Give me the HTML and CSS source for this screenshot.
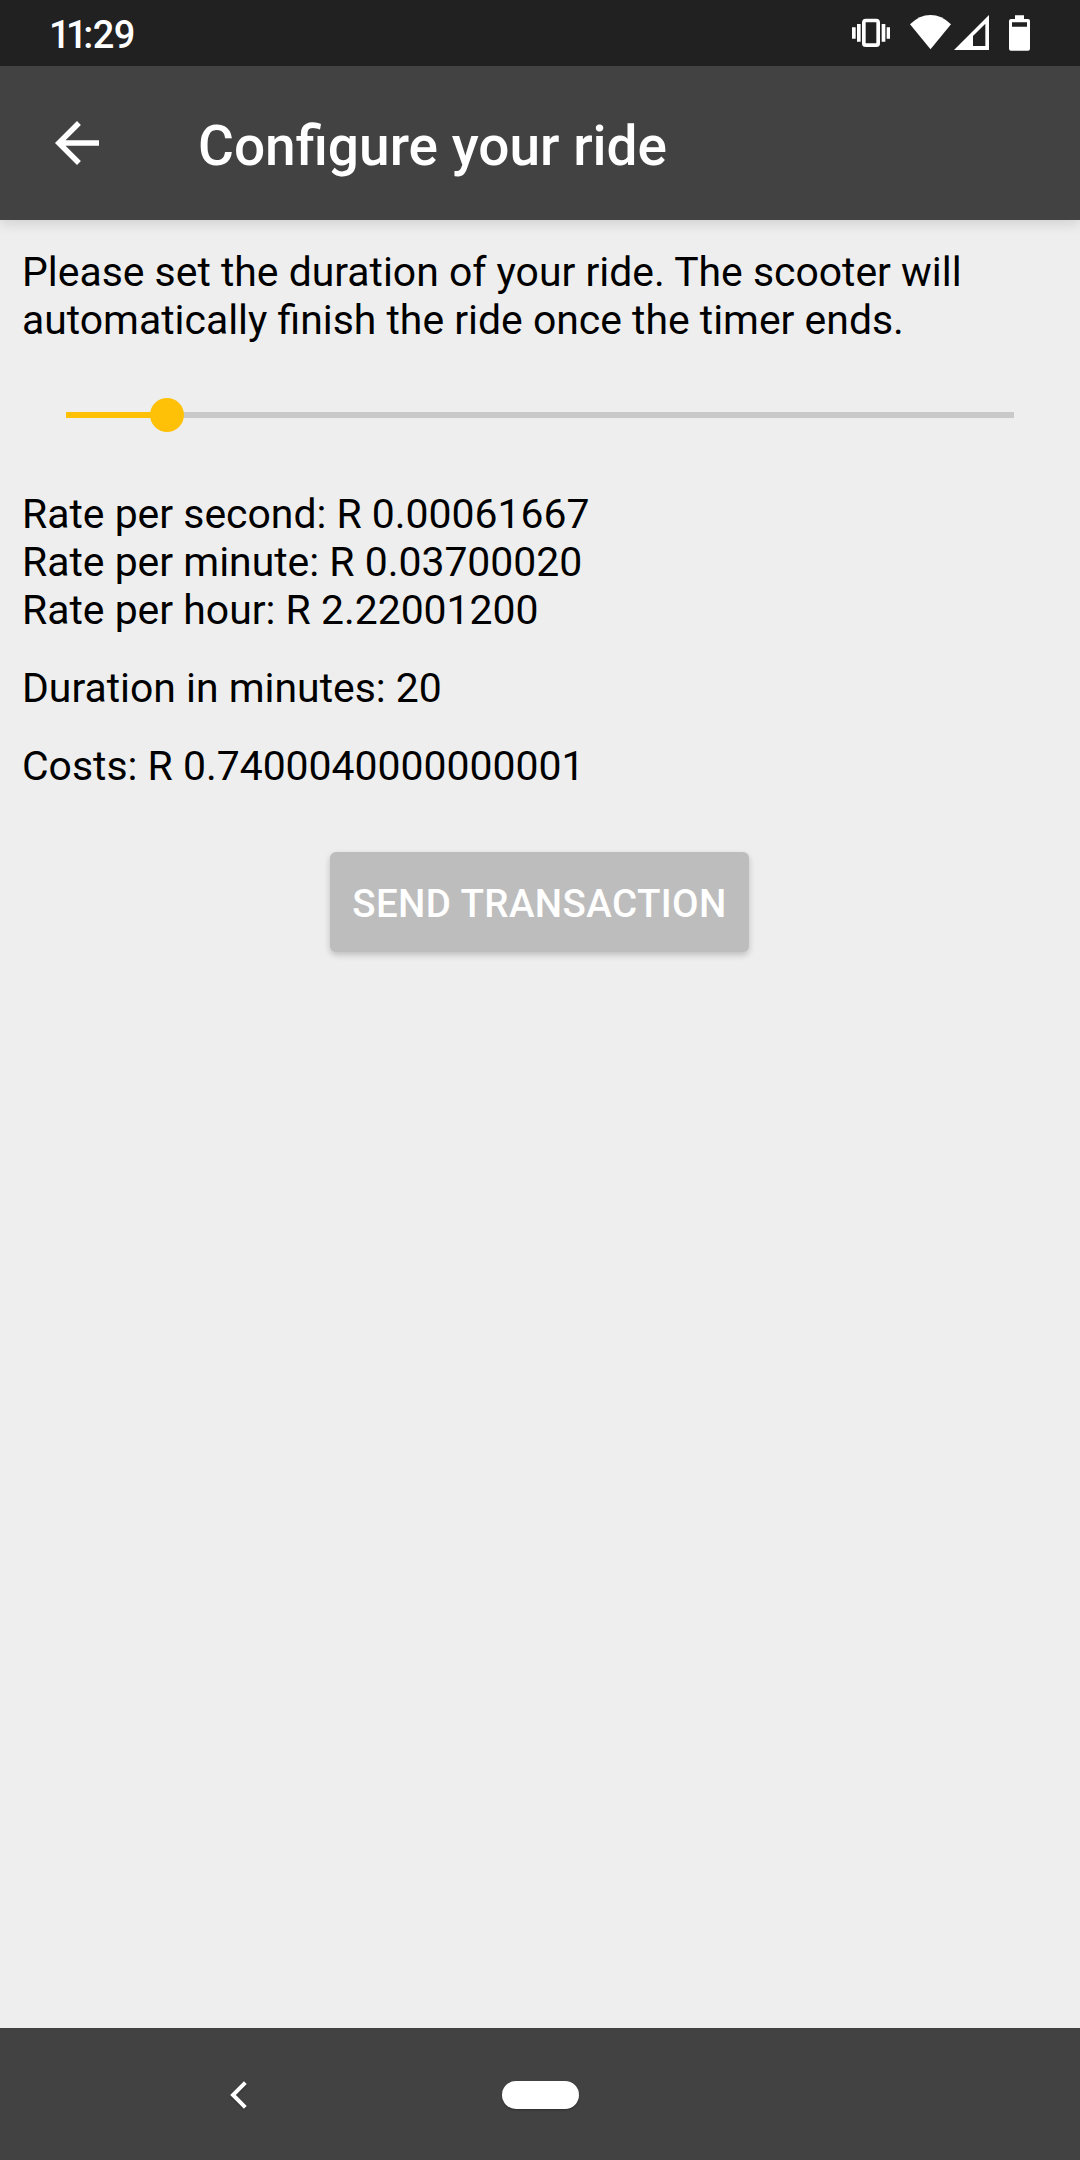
FILE: index.html
```html
<!DOCTYPE html>
<html lang="en">
<head>
<meta charset="utf-8">
<title>Configure your ride</title>
<link rel="stylesheet" href="styles.css">
</head>
<body>
<div class="screen">
  <div class="status-bar">
    <span class="clock"><span class="ones">11</span>:29</span>
    <svg class="status-icons" viewBox="0 0 780 198" aria-hidden="true">
      <rect x="131.500" y="61.500" width="43" height="74" rx="6" fill="none" stroke="#fff" stroke-width="11"/>
      <path fill="#fff" d="M96 82h11v34H96zM111 72h11v53h-11zM185 72h11v53h-11zM200 82h10v34h-10z"/>
      <path fill="#fff" d="M270 73Q298 45 331.500 45T393 73L331.500 148z"/>
      <path fill="#fff" fill-rule="evenodd" d="M402 150L507 45V150zM459 108V138H496V71z"/>
      <path fill="#fff" fill-rule="evenodd" d="M585 46h27v11h12q6 0 6 6v83q0 6-6 6h-51q-6 0-6-6V63q0-6 6-6h12zM576 67v13h45V67z"/>
    </svg>
  </div>
  <header class="app-bar">
    <svg class="back" viewBox="0 0 24 24" aria-label="Back"><path fill="#fff" d="M20 11H7.830l5.590-5.590L12 4l-8 8 8 8 1.410-1.410L7.830 13H20z"/></svg>
    <h1 class="title">Configure your ride</h1>
  </header>
  <main class="content">
    <p class="text">Please set the duration of your ride. The scooter will automatically finish the ride once the timer ends.</p>
    <div class="slider">
      <div class="filled" style="width: 101px"></div>
      <div class="thumb"></div>
      <div class="rest"></div>
    </div>
    <p class="text">Rate per second: R 0.00061667<br>Rate per minute: R 0.03700020<br>Rate per hour: R 2.22001200</p>
    <p class="text">Duration in minutes: 20</p>
    <p class="text">Costs: R 0.7400040000000001</p>
    <button class="send">SEND TRANSACTION</button>
  </main>
  <nav class="nav-bar">
    <svg class="nav-back" viewBox="0 0 51 84" aria-label="Back"><path fill="none" stroke="#fff" stroke-width="12" d="M46 5L9 42L46 79"/></svg>
    <div class="home"></div>
  </nav>
</div>
</body>
</html>
```

FILE: styles.css
```css
* { box-sizing: border-box; }
body { margin: 0; font-family: Roboto, sans-serif; }
.screen {
  width: 1080px;
  height: 2160px;
  display: flex;
  flex-direction: column;
  background: #eeeeee;
  overflow: hidden;
}
.status-bar {
  height: 66px;
  display: flex;
  justify-content: space-between;
  background: #212121;
  color: #fff;
}
.clock {
  padding-left: 49px;
  font-size: 38px;
  font-weight: 500;
  line-height: 70px;
  letter-spacing: -0.5px;
}
.ones { letter-spacing: -4.5px; }
.status-icons { width: 260px; height: 66px; }
.app-bar {
  height: 154px;
  display: flex;
  align-items: center;
  padding-left: 44px;
  background: #424242;
  box-shadow: 0 4px 12px rgba(0, 0, 0, 0.12);
}
.back { width: 66px; height: 66px; }
.title {
  margin: 5px 0 0 88px;
  font-size: 55px;
  font-weight: 500;
  line-height: 64px;
  color: #fff;
}
.content {
  flex: 1;
  display: flex;
  flex-direction: column;
  padding: 28px 22px 0;
}
.text {
  margin: 0 0 30px;
  font-size: 40.9px;
  line-height: 48px;
  color: #000;
}
.slider {
  height: 34px;
  display: flex;
  align-items: center;
  margin: 24px 44px 58px;
}
.filled { height: 6px; background: #ffc107; }
.thumb {
  flex: none;
  width: 34px;
  height: 34px;
  margin: 0 -17px;
  border-radius: 50%;
  background: #ffc107;
  z-index: 1;
}
.rest { flex: 1; height: 6px; background: #c9c9c9; }
.send {
  align-self: center;
  width: 419px;
  height: 100px;
  margin: 32px 1px 0 0;
  padding: 4px 0 0;
  border: 0;
  border-radius: 6px;
  background: #bdbdbd;
  box-shadow: 0 3px 6px rgba(0, 0, 0, 0.2);
  color: #fff;
  font: 500 38.5px/46px Roboto, sans-serif;
  letter-spacing: 0.4px;
  white-space: nowrap;
}
.nav-bar {
  height: 132px;
  display: flex;
  align-items: center;
  padding: 1px 0 0 230px;
  background: #424242;
}
.nav-back {
  width: 17px;
  height: 28px;
  filter: drop-shadow(0 1px 1px rgba(0, 0, 0, 0.3));
}
.home {
  width: 77px;
  height: 28px;
  margin-left: 255px;
  border-radius: 14px;
  background: #fff;
  box-shadow: 0 1px 2px rgba(0, 0, 0, 0.3);
}
```
